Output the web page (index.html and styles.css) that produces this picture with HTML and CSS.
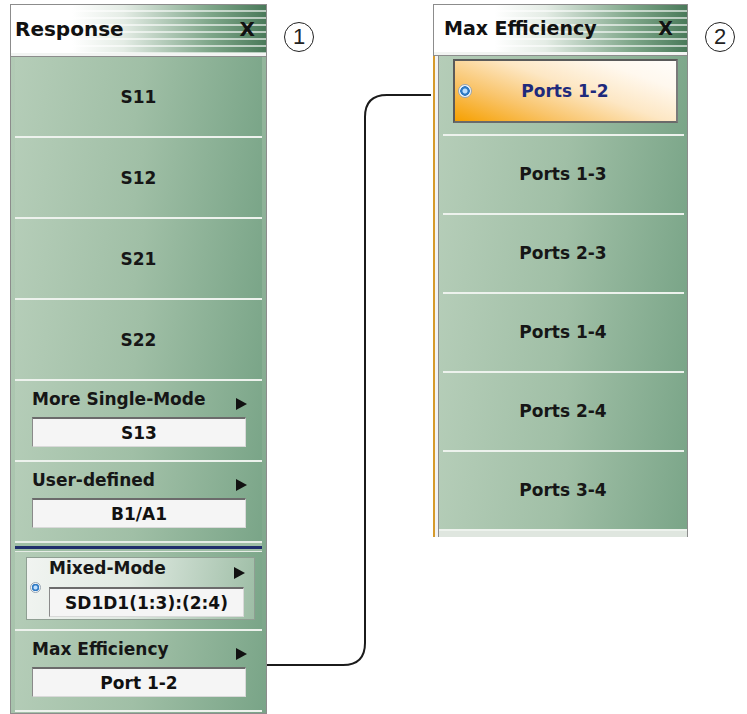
FILE: index.html
```html
<!DOCTYPE html>
<html lang="en">
<head>
    <meta charset="UTF-8">
    <title>Response / Max Efficiency</title>
    <link rel="stylesheet" href="styles.css">
</head>
<body>
    <div class="stage">
        <!-- Response menu -->
        <div class="panel resp">
            <div class="head">
                <span class="title">Response</span>
                <span class="close">X</span>
            </div>
            <div class="row plain first">S11</div>
            <div class="row plain">S12</div>
            <div class="row plain">S21</div>
            <div class="row plain">S22</div>
            <div class="row combo">
                <div class="combo-top"><span>More Single-Mode</span><i class="arrow"></i></div>
                <div class="value">S13</div>
            </div>
            <div class="row combo">
                <div class="combo-top"><span>User-defined</span><i class="arrow"></i></div>
                <div class="value">B1/A1</div>
            </div>
            <div class="blue-rule"></div>
            <div class="row mixed">
                <div class="mix-box">
                    <i class="radio"></i>
                    <div class="mix-main">
                        <div class="combo-top"><span>Mixed-Mode</span><i class="arrow"></i></div>
                        <div class="value">SD1D1(1:3):(2:4)</div>
                    </div>
                </div>
            </div>
            <div class="row combo">
                <div class="combo-top"><span>Max Efficiency</span><i class="arrow"></i></div>
                <div class="value">Port 1-2</div>
            </div>
            <div class="tail"></div>
        </div>

        <div class="badge">1</div>

        <!-- Max Efficiency submenu -->
        <div class="panel eff">
            <div class="head">
                <span class="title">Max Efficiency</span>
                <span class="close">X</span>
            </div>
            <div class="eff-body">
                <div class="row first">
                    <div class="selected"><i class="radio"></i><span>Ports 1-2</span></div>
                </div>
                <div class="row plain">Ports 1-3</div>
                <div class="row plain">Ports 2-3</div>
                <div class="row plain">Ports 1-4</div>
                <div class="row plain">Ports 2-4</div>
                <div class="row plain">Ports 3-4</div>
                <div class="tail"></div>
            </div>
        </div>

        <div class="badge">2</div>

        <!-- callout line from Max Efficiency to submenu -->
        <svg class="connector" width="747" height="714" viewBox="0 0 747 714">
            <path d="M267 665 H343 Q365 665 365 643 V117 Q365 95 387 95 H431" fill="none" stroke="#1b1b1b" stroke-width="2"/>
        </svg>
    </div>
</body>
</html>
```

FILE: styles.css
```css
* {
    box-sizing: border-box;
}
body {
    margin: 0;
    background: #ffffff;
    font-family: "DejaVu Sans", Verdana, sans-serif;
    font-weight: bold;
    color: #161616;
}
.stage {
    position: relative;
    display: flex;
    align-items: flex-start;
    padding: 4px 0 0 10px;
    width: 747px;
    height: 714px;
    overflow: hidden;
}
.panel {
    border: 1px solid #8c8c8c;
    border-bottom: none;
    background: linear-gradient(100deg, #b3cbb6 0%, #9fbea5 55%, #7aa488 100%);
}
.resp {
    width: 257px;
    border-bottom: 1px solid #8c8c8c;
}
.eff {
    width: 255px;
    margin-left: 119px;
    border: none;
    background: none;
}
.head {
    height: 52px;
    display: flex;
    align-items: center;
    justify-content: space-between;
    padding: 0 11px 4px 4px;
    border-bottom: 1px solid #8c8c8c;
    box-shadow: inset 0 -3px 0 #f2f4f2;
    background:
        repeating-linear-gradient(to bottom, transparent 0 5px, rgba(255, 255, 255, 0.6) 5px 7px),
        linear-gradient(to right, #ffffff 24%, #e4ece5 44%, #7ea689 78%, #4a7a5a 100%);
    font-size: 20px;
    color: #111;
}
.eff .head {
    border: 1px solid #8c8c8c;
    padding: 0 14px 4px 10px;
    font-size: 19px;
}
.row {
    margin: 0 4px;
    border-top: 2px solid #edf2ed;
    background: linear-gradient(100deg, #b5cdb8 0%, #a0bfa6 50%, #7aa588 100%);
}
.row.first {
    border-top: none;
}
.plain {
    height: 81px;
    display: flex;
    align-items: center;
    justify-content: center;
    font-size: 17px;
}
.plain.first {
    height: 79px;
}
.combo {
    height: 81px;
    padding: 8px 15px 0 17px;
    font-size: 17px;
}
.combo-top {
    height: 20px;
    line-height: 20px;
    display: flex;
    justify-content: space-between;
    align-items: center;
}
.arrow {
    width: 0;
    height: 0;
    margin-top: 10px;
    border-left: 11px solid #111;
    border-top: 6px solid transparent;
    border-bottom: 6px solid transparent;
}
.value {
    margin-top: 8px;
    margin-right: 1px;
    height: 30px;
    line-height: 28px;
    text-align: center;
    background: #f5f5f5;
    border-top: 2px solid #6b6b6b;
    border-left: 1px solid #8a8a8a;
    border-right: 1px solid #d9d9d9;
    border-bottom: 1px solid #d9d9d9;
    color: #111;
}
.blue-rule {
    margin: 0 4px;
    padding: 3px 0 2px;
    border-top: 2px solid #e6ede6;
    background: #9fbea5;
}
.blue-rule::before {
    content: "";
    display: block;
    height: 3px;
    background: #1f2e6b;
}
.mixed {
    height: 78px;
    border-top: 1px solid #e6ede6;
    padding: 5px 7px 0 11px;
}
.mix-box {
    height: 63px;
    display: flex;
    border: 1px solid #8f9f93;
    background: linear-gradient(100deg, #f1f4f1 0%, #dfe9e1 45%, #9dbda5 100%);
    font-size: 17px;
}
.mix-box .radio {
    margin: 24px 8px 0 3px;
}
.mix-main {
    flex: 1;
    padding: 0 9px 0 0;
}
.mix-main .value {
    margin-top: 9px;
}
.radio {
    flex: none;
    display: block;
    width: 11px;
    height: 11px;
    border-radius: 50%;
    border: 1px solid #9aa7b3;
    background: radial-gradient(circle at 50% 50%, #bfe0ff 0 1.5px, #2f7ac3 2.5px 3.5px, #eef3f8 4px);
}
.tail {
    margin: 0 4px;
    height: 3px;
    border-top: 2px solid #edf2ed;
}
.eff-body {
    border-left: 2px solid #d69a2c;
    padding-left: 3px;
    background: #f3f3f3;
}
.eff-body .row,
.eff-body .tail {
    margin: 0;
    border-left: 1px solid #8c8c8c;
    border-right: 1px solid #8c8c8c;
}
.eff-body .plain {
    height: 79px;
    border-top: none;
    position: relative;
}
.eff-body .plain::before {
    content: "";
    position: absolute;
    top: 0;
    left: 4px;
    right: 3px;
    height: 2px;
    background: #edf2ed;
}
.eff-body .row.first {
    height: 78px;
    padding: 3px 9px 0 14px;
}
.eff-body .tail {
    height: 8px;
    border-top: none;
    background: linear-gradient(#edf2ed 0 2px, #dfe6df 2px);
}
.selected {
    height: 64px;
    display: flex;
    align-items: center;
    padding-left: 3px;
    border: 2px solid #5a5a5a;
    border-right-color: #7a7a7a;
    border-bottom-color: #6a6a6a;
    background: linear-gradient(20deg, #f6a000 0%, #f9c46a 28%, #fde7c4 55%, #fff8ee 80%, #fffdfa 100%);
    font-size: 17px;
    color: #1e2a7c;
}
.selected .radio {
    width: 14px;
    height: 14px;
    background: radial-gradient(circle at 50% 50%, #bfe0ff 0 2px, #2f7ac3 3px 4.5px, #eef3f8 5px);
}
.selected span {
    flex: 1;
    text-align: center;
    margin-right: 18px;
}
.badge {
    flex: none;
    width: 30px;
    height: 30px;
    margin: 18px 0 0 17px;
    border: 1.5px solid #222;
    border-radius: 50%;
    display: flex;
    align-items: center;
    justify-content: center;
    font-family: "Liberation Sans", Arial, sans-serif;
    font-weight: normal;
    font-size: 22px;
    color: #222;
}
.connector {
    position: absolute;
    left: 0;
    top: 0;
    pointer-events: none;
}
```
